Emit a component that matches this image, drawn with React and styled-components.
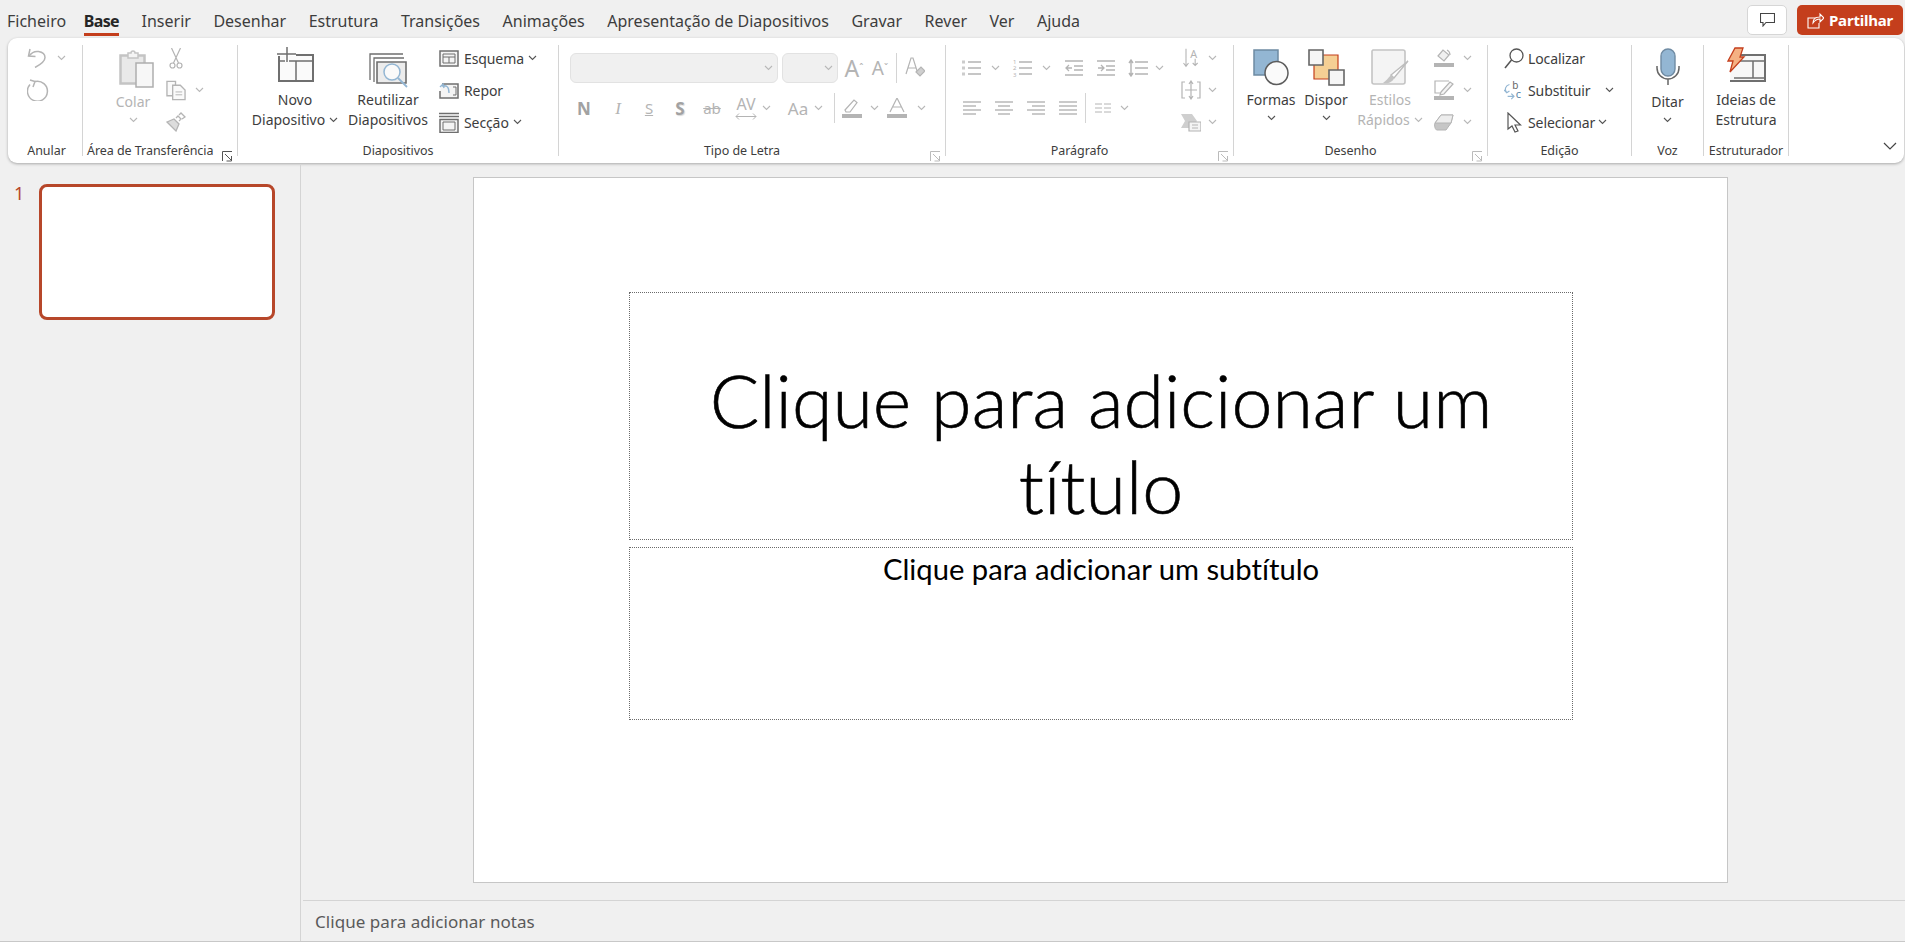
import React from 'react'
import styled, { createGlobalStyle } from 'styled-components'

const ACCENT = '#c43e1c'
const OFF = '#b4b4b4'
const DARK = '#6f6f6f'
const BLUE = '#93b6d3'

const GlobalStyle = createGlobalStyle`
  html, body { margin: 0; padding: 0; background: #f0f0f0; overflow: hidden; }
  body { font-family: "Noto Sans", "Open Sans", "Liberation Sans", sans-serif; color: #3a3a3a; }
`

const Page = styled.div`
  width: 1905px;
  height: 942px;
  display: flex;
  flex-direction: column;
  background: #f0f0f0;
`

const TopBar = styled.div`
  height: 38px;
  display: flex;
  align-items: flex-start;
  padding-left: 7px;
  flex-shrink: 0;
`

const Tabs = styled.div`
  display: flex;
  gap: 22.5px;
  flex: 1;
`

const Tab = styled.div`
  height: 36px;
  box-sizing: border-box;
  padding-top: 10px;
  font-size: 16px;
  line-height: 22px;
  white-space: nowrap;
  color: ${p => (p.$active ? '#262626' : '#3d3d3d')};
  font-weight: ${p => (p.$active ? 700 : 400)};
  letter-spacing: ${p => (p.$active ? '-0.6px' : '0')};
  margin-left: ${p => (p.$active ? '-5px' : '0')};
  border-bottom: 3px solid ${p => (p.$active ? ACCENT : 'transparent')};
`

const TopActions = styled.div`
  display: flex;
  gap: 10px;
  padding: 5px 2px 0 0;
`

const CommentButton = styled.div`
  width: 40px;
  height: 30px;
  box-sizing: border-box;
  background: #fff;
  border: 1px solid #d6d6d6;
  border-radius: 5px;
  display: flex;
  align-items: center;
  justify-content: center;
`

const ShareButton = styled.div`
  width: 106px;
  height: 30px;
  box-sizing: border-box;
  background: ${ACCENT};
  border-radius: 5px;
  color: #fff;
  font-size: 15px;
  font-weight: 700;
  letter-spacing: -0.2px;
  display: flex;
  align-items: center;
  gap: 5px;
  padding-left: 10px;
`

const Ribbon = styled.div`
  height: 125px;
  margin: 0 1px 0 8px;
  box-sizing: border-box;
  padding-top: 7px;
  background: #fff;
  border-radius: 9px;
  box-shadow: 0 1px 3px rgba(0, 0, 0, 0.3);
  display: flex;
  flex-shrink: 0;
`

const Group = styled.div`
  width: ${p => p.$w}px;
  height: 111px;
  box-sizing: border-box;
  border-right: 1px solid #d4d4d4;
  display: flex;
  flex-direction: column;
  position: relative;
  flex-shrink: 0;
`

const GroupBody = styled.div`
  flex: 1;
  display: flex;
  padding-left: ${p => p.$pl || 0}px;
`

const GroupLabel = styled.div`
  height: 10px;
  font-size: 12.5px;
  line-height: 10px;
  letter-spacing: -0.05px;
  text-align: ${p => (p.$left ? 'left' : 'center')};
  color: #3d3d3d;
  white-space: nowrap;
  padding-left: ${p => p.$pl || 0}px;
  padding-right: ${p => p.$pr || 0}px;
`

const LauncherSlot = styled.div`
  position: absolute;
  right: 4px;
  bottom: 0;
  width: 11px;
  height: 11px;
`

const Big = styled.div`
  width: ${p => p.$w}px;
  margin-left: ${p => p.$ml || 0}px;
  display: flex;
  flex-direction: column;
  align-items: center;
  flex-shrink: 0;
  font-size: 14px;
  line-height: 20px;
  white-space: nowrap;
  color: ${p => (p.$off ? OFF : '#3d3d3d')};
`

const BigIcon = styled.div`
  height: ${p => p.$h || 45}px;
  width: 100%;
  display: flex;
  justify-content: center;
  align-items: flex-start;
  padding-top: ${p => p.$top || 2}px;
  padding-left: ${p => p.$pl || 0}px;
  box-sizing: border-box;
`

const BigLine = styled.div`
  display: flex;
  align-items: center;
  gap: 4px;
  height: 20px;
`

const ChevLine = styled.div`
  height: ${p => p.$h || 16}px;
  display: flex;
  align-items: center;
`

const Stack = styled.div`
  display: flex;
  flex-direction: column;
  gap: 6px;
  margin-left: ${p => p.$ml || 0}px;
  flex-shrink: 0;
`

const StackRow = styled.div`
  height: 26px;
  display: flex;
  align-items: center;
  font-size: 14px;
  letter-spacing: -0.1px;
  white-space: nowrap;
  color: #3d3d3d;
`

const RowText = styled.span`
  margin-left: ${p => p.$ml ?? 5}px;
`

const Rows = styled.div`
  display: flex;
  flex-direction: column;
  gap: 10px;
  padding-top: 8px;
  width: ${p => (p.$w ? `${p.$w}px` : 'auto')};
  flex-shrink: 0;
`

const ToolRow = styled.div`
  height: 30px;
  display: flex;
  align-items: center;
`

const Cell = styled.div`
  width: ${p => p.$w}px;
  margin-left: ${p => p.$ml || 0}px;
  height: 30px;
  display: flex;
  align-items: center;
  justify-content: center;
  flex-shrink: 0;
  color: ${OFF};
`

const SpacingCell = styled(Cell)`
  flex-direction: column;
  gap: 1px;
`

const Glyph = styled.span`
  font-family: ${p => (p.$serif ? '"Liberation Serif", serif' : '"Noto Sans", sans-serif')};
  font-size: ${p => p.$size || 15}px;
  font-weight: ${p => (p.$bold ? 700 : 400)};
  font-style: ${p => (p.$italic ? 'italic' : 'normal')};
  line-height: 1;
  color: ${p => (p.$bold ? '#a2a2a2' : OFF)};
  text-decoration: ${p => p.$deco || 'none'};
  text-shadow: ${p => (p.$shadow ? '1px 1px 1px #d8d8d8' : 'none')};
`

const Combo = styled.div`
  width: ${p => p.$w}px;
  margin-left: ${p => p.$ml || 0}px;
  height: 30px;
  box-sizing: border-box;
  background: #f0f0f0;
  border: 1px solid #e2e2e2;
  border-radius: 6px;
  display: flex;
  align-items: center;
  justify-content: flex-end;
  padding-right: 4px;
  flex-shrink: 0;
`

const VSep = styled.div`
  width: 1px;
  height: 30px;
  margin-left: ${p => p.$ml || 0}px;
  background: #d4d4d4;
  flex-shrink: 0;
`

const RibbonRest = styled.div`
  flex: 1;
  display: flex;
  justify-content: flex-end;
  align-items: flex-end;
  padding: 0 7px 6px 0;
  height: 111px;
  box-sizing: border-box;
`

const Main = styled.div`
  flex: 1;
  display: flex;
  margin-top: 2px;
  border-bottom: 1px solid #c8c8c8;
  min-height: 0;
`

const Sidebar = styled.div`
  width: 301px;
  box-sizing: border-box;
  border-right: 1px solid #d4d4d4;
  display: flex;
  padding: 19px 0 0 14px;
  flex-shrink: 0;
`

const ThumbNumber = styled.div`
  width: 25px;
  margin-top: -2px;
  font-size: 18px;
  line-height: 22px;
  color: #b7472a;
`

const Thumb = styled.div`
  width: 236px;
  height: 136px;
  box-sizing: border-box;
  background: #fff;
  border: 3px solid #b7472a;
  border-radius: 8px;
`

const Workspace = styled.div`
  flex: 1;
  display: flex;
  flex-direction: column;
  min-width: 0;
`

const SlideArea = styled.div`
  flex: 1;
  padding: 12px 0 0 172px;
`

const Slide = styled.div`
  width: 1255px;
  height: 706px;
  box-sizing: border-box;
  background: #fff;
  border: 1px solid #c6c6c6;
  padding: 114px 0 0 155px;
  display: flex;
  flex-direction: column;
  gap: 7px;
`

const TitleBox = styled.div`
  width: 944px;
  height: 248px;
  box-sizing: border-box;
  border: 1px dotted #6a6a6a;
  padding: 0 12px 10px;
  display: flex;
  align-items: flex-end;
  text-align: center;
  font-family: Lato, "Open Sans", sans-serif;
  font-weight: 300;
  font-size: 73.5px;
  line-height: 86px;
  font-variant-ligatures: none;
  color: #000;
  -webkit-text-stroke: 0.6px #000;
`

const SubtitleBox = styled.div`
  width: 944px;
  height: 173px;
  box-sizing: border-box;
  border: 1px dotted #6a6a6a;
  padding-top: 3px;
  text-align: center;
  font-family: Lato, "Open Sans", sans-serif;
  font-size: 29.2px;
  line-height: 36px;
  font-variant-ligatures: none;
  color: #000;
`

const TitleText = styled.div`
  width: 100%;
`

const Notes = styled.div`
  height: 41px;
  margin-left: 2px;
  box-sizing: border-box;
  border-top: 1px solid #d4d4d4;
  padding-left: 12px;
  display: flex;
  align-items: center;
  font-size: 17px;
  letter-spacing: 0.05px;
  color: #5a5a5a;
`

const Chev = ({ off = true }) => (
  <svg width="9" height="6" viewBox="0 0 9 6" fill="none">
    <path d="M1 1l3.5 3.5L8 1" stroke={off ? '#b8b8b8' : '#555'} strokeWidth="1.1" />
  </svg>
)

const Launcher = ({ dark }) => (
  <svg width="11" height="11" viewBox="0 0 11 11" fill="none" stroke={dark ? '#555' : '#bbb'}>
    <path d="M.5 10V.5H10M3 3l6 6M9.5 5v5h-5" />
  </svg>
)

const UndoIcon = () => (
  <svg width="20" height="20" viewBox="0 0 20 20" fill="none" stroke={OFF} strokeWidth="1.5">
    <path d="M3 1L1.5 8l7 .5" />
    <path d="M2 8c3-4 6-5 9.500-4.500C15 4 18 6 18 9.500c0 3-2.500 6-10 10" />
  </svg>
)

const RedoIcon = () => (
  <svg width="22" height="22" viewBox="0 0 22 22" fill="none" stroke={OFF} strokeWidth="1.5">
    <path d="M8 2.500a10 10 0 1 1-5 3" />
    <path d="M3 1l5 1.500L6 8" />
  </svg>
)

const PasteIcon = () => (
  <svg width="35" height="39" viewBox="0 0 35 39" fill="none">
    <path d="M1.500 6.500h24v28h-24z" fill="#e9e9e9" stroke="#c4c4c4" strokeWidth="2.500" />
    <path d="M9 6.500V4h3a2 2 0 0 1 4 0h3v5H9z" fill="#f4f4f4" stroke="#c4c4c4" strokeWidth="1.500" />
    <path d="M17 14h17v24H17z" fill="#f7f7f7" stroke="#aeaeae" strokeWidth="1.500" />
  </svg>
)

const ScissorsIcon = () => (
  <svg width="14" height="21" viewBox="0 0 14 21" fill="none" stroke={OFF} strokeWidth="1.200">
    <path d="M2.500 0l7 15M11.500 0l-7 15" />
    <circle cx="3.500" cy="17.500" r="2.500" />
    <circle cx="10.500" cy="17.500" r="2.500" />
  </svg>
)

const CopyIcon = () => (
  <svg width="21" height="21" viewBox="0 0 21 21" fill="#fafafa" stroke={OFF} strokeWidth="1.400">
    <path d="M1 1h9v15H1z" />
    <path d="M7 5h8l5 5v10H7z" />
    <path d="M10 12h7M10 15h7" strokeWidth="1" />
  </svg>
)

const BrushIcon = () => (
  <svg width="20" height="20" viewBox="0 0 20 20" fill="none" stroke={OFF} strokeWidth="1.300">
    <path d="M1 10l7-3 5 5-3 7z" fill="#dcdcdc" />
    <path d="M10 6l2-2 3 3-2 2M13 3l2-2 4 4-3 2" />
  </svg>
)

const NewSlideIcon = () => (
  <svg width="39" height="36" viewBox="0 0 39 36" fill="none">
    <path d="M3 8h34v26H3z" fill="#fafafa" stroke={DARK} strokeWidth="2" />
    <path d="M3 14h34M20 14v20" stroke={DARK} strokeWidth="1.500" />
    <path d="M11 0v15M1 7h19" stroke="#fff" strokeWidth="4" />
    <path d="M11 0v15M1 7h19" stroke={DARK} strokeWidth="1.500" />
  </svg>
)

const ReuseIcon = () => (
  <svg width="39" height="35" viewBox="0 0 39 35" fill="none">
    <path d="M1 27V1h33" stroke={DARK} strokeWidth="1.300" />
    <path d="M5 29V5h30" stroke={DARK} strokeWidth="1.300" />
    <path d="M8 9h29v21H8z" fill="#ececec" stroke={DARK} strokeWidth="1.600" />
    <circle cx="23" cy="19" r="8" fill="#fafafa" stroke={BLUE} strokeWidth="1.500" />
    <path d="M29 25l9 9" stroke={BLUE} strokeWidth="1.800" />
  </svg>
)

const LayoutIcon = () => (
  <svg width="20" height="17" viewBox="0 0 20 17" fill="#f4f4f4" stroke={DARK} strokeWidth="1.500">
    <path d="M1 1h18v15H1z" />
    <path d="M4 4h12v9H4zM4 7h12M10 7v6" strokeWidth="1" />
  </svg>
)

const ResetIcon = () => (
  <svg width="20" height="17" viewBox="0 0 20 17" fill="none">
    <path d="M3 2h16v14H1V9" fill="#f4f4f4" stroke={DARK} strokeWidth="1.500" />
    <path d="M14 5h3v8h-3" stroke={DARK} />
    <path d="M1 5l3-3 1 4M3 4c5-1 7 1 7 7" stroke={BLUE} strokeWidth="1.400" />
  </svg>
)

const SectionIcon = () => (
  <svg width="20" height="21" viewBox="0 0 20 21" fill="#f4f4f4" stroke={DARK} strokeWidth="1.500">
    <path d="M0 1.500h20M0 4.500h20" />
    <path d="M1 7.500h18v13H1z" />
    <path d="M4 10h12v8H4z" strokeWidth="1" />
  </svg>
)

const ClearFormatIcon = () => (
  <svg width="20" height="22" viewBox="0 0 20 22" fill="none" stroke={OFF} strokeWidth="1.200">
    <path d="M1 17L6 1h2l5 16M3 11h8" />
    <path d="M11 15l5-5 4 4-5 5z" fill="#cfcfcf" />
  </svg>
)

const SpacingArrows = () => (
  <svg width="22" height="7" viewBox="0 0 22 7" fill="none" stroke={OFF}>
    <path d="M1 3.500h20M4 .500l-3 3 3 3M18 .500l3 3-3 3" />
  </svg>
)

const HighlightIcon = () => (
  <svg width="20" height="20" viewBox="0 0 20 20" fill="none" stroke={OFF} strokeWidth="1.200">
    <path d="M3 12L12 2l3 2.500L8 14H4z" />
    <path d="M0 16h20v4H0z" fill={OFF} stroke="none" />
  </svg>
)

const FontColorIcon = () => (
  <svg width="20" height="20" viewBox="0 0 20 20" fill="none" stroke={OFF} strokeWidth="1.200">
    <path d="M3 14L10 0l7 14M5.500 9h9" />
    <path d="M0 16h20v4H0z" fill={OFF} stroke="none" />
  </svg>
)

const LinesIcon = ({ w = 18, ys = [3, 7, 11, 15], xs = [] }) => (
  <svg width={w} height="18" viewBox={`0 0 ${w} 18`} fill="none" stroke={OFF} strokeWidth="1.400">
    {ys.map((y, i) => (
      <path key={y} d={`M${xs[i]?.[0] ?? 0} ${y}H${xs[i]?.[1] ?? w}`} />
    ))}
  </svg>
)

const BulletsIcon = () => (
  <svg width="19" height="18" viewBox="0 0 19 18" fill="none" stroke={OFF} strokeWidth="1.400">
    <path d="M6 3h13M6 9h13M6 15h13" />
    <path d="M0 1.500h3v3H0zM0 7.500h3v3H0zM0 13.500h3v3H0z" fill="#ccc" stroke="none" />
  </svg>
)

const NumbersIcon = () => (
  <svg width="20" height="22" viewBox="0 0 20 22" fill="none" stroke={OFF} strokeWidth="1.400">
    <path d="M7 5h13M7 11h13M7 17h13" />
    <text x="1" y="7" fontFamily="Noto Sans" fontSize="6" fill={OFF} stroke="none">1</text>
    <text x="1" y="13" fontFamily="Noto Sans" fontSize="6" fill={OFF} stroke="none">2</text>
    <text x="1" y="20" fontFamily="Noto Sans" fontSize="6" fill={OFF} stroke="none">3</text>
  </svg>
)

const IndentIcon = ({ flip }) => (
  <svg width="18" height="18" viewBox="0 0 18 18" fill="none" stroke={OFF} strokeWidth="1.300">
    <path d="M0 2h18M9 7h9M9 11h9M0 16h18" />
    {flip ? <path d="M7 9H1M4 6l3 3-3 3" /> : <path d="M1 9h6M4 6L1 9l3 3" />}
  </svg>
)

const LineSpacingIcon = () => (
  <svg width="20" height="18" viewBox="0 0 20 18" fill="none" stroke={OFF} strokeWidth="1.400">
    <path d="M7 3h13M7 9h13M7 15h13M3 1v16M1 4l2-3 2 3M1 14l2 3 2-3" />
  </svg>
)

const ColumnsIcon = () => (
  <svg width="16" height="10" viewBox="0 0 16 10" fill="none" stroke={OFF}>
    <path d="M0 1h7M9 1h7M0 5h7M9 5h7M0 9h7M9 9h7" />
  </svg>
)

const TextDirIcon = () => (
  <svg width="24" height="24" viewBox="0 0 24 24" fill="none" stroke={OFF} strokeWidth="1.300">
    <path d="M6 1v20M3 18l3 4 3-4M17 13v8M14 18l3 3 3-3" />
    <text x="11" y="12" fontFamily="Noto Sans" fontSize="13" fill={OFF} stroke="none">A</text>
  </svg>
)

const AlignTextIcon = () => (
  <svg width="20" height="20" viewBox="0 0 20 20" fill="none" stroke={OFF} strokeWidth="1.200">
    <path d="M4 2H1v16h3M16 2h3v16h-3M4 10h12M10 1v18M8 4l2-3 2 3M8 16l2 3 2-3" />
  </svg>
)

const SmartArtIcon = () => (
  <svg width="20" height="20" viewBox="0 0 20 20" fill="none">
    <path d="M0 2h11l5 7-5 7H0l4-7z" fill="#cfcfcf" />
    <path d="M8 10h12v9H8z" fill="#f4f4f4" stroke={OFF} strokeWidth="1.200" />
    <path d="M11 13h6M11 16h6" stroke={OFF} />
  </svg>
)

const ShapesIcon = () => (
  <svg width="36" height="37" viewBox="0 0 36 37" fill="none">
    <path d="M1 1h24v25H1z" fill={BLUE} stroke="#6e8ba3" strokeWidth="1.500" />
    <circle cx="23.500" cy="24" r="11.500" fill="#fafafa" stroke="#5c5c5c" strokeWidth="1.500" />
  </svg>
)

const ArrangeIcon = () => (
  <svg width="37" height="37" viewBox="0 0 37 37" fill="none">
    <path d="M6 6h24v24H6z" fill="#f5cf94" stroke={ACCENT} strokeWidth="1.200" />
    <path d="M1 1h14v15H1z" fill="#f6f6f6" stroke="#666" strokeWidth="1.600" />
    <path d="M21 21h15v15H21z" fill="#f6f6f6" stroke="#666" strokeWidth="1.600" />
  </svg>
)

const QuickStylesIcon = () => (
  <svg width="39" height="37" viewBox="0 0 39 37" fill="none">
    <path d="M2 1h30c1 0 2 1 2 2v30c0 1-1 2-2 2H3c-1 0-2-1-2-2V2z" fill="#f4f4f4" stroke="#c4c4c4" strokeWidth="1.600" />
    <path d="M37 12L23 29l-3-3z" fill="#fff" stroke="#bdbdbd" strokeWidth="1.400" />
    <path d="M20 26l3 3c-1 4-6 6-11 5 3-2 5-5 8-8z" fill="#c4c4c4" />
  </svg>
)

const FillIcon = () => (
  <svg width="20" height="20" viewBox="0 0 20 20" fill="none" stroke={OFF} strokeWidth="1.200">
    <path d="M4 8l5-6 6 5-5 6z" fill="#f0f0f0" />
    <path d="M13 2c2 1 3 3 3 5" />
    <path d="M0 15h20v4H0z" fill={OFF} stroke="none" />
  </svg>
)

const OutlineIcon = () => (
  <svg width="20" height="20" viewBox="0 0 20 20" fill="none" stroke={OFF} strokeWidth="1.200">
    <path d="M15 1H1v12h7" />
    <path d="M7 12l9-10 3 2-9 10-4 1z" fill="#f4f4f4" />
    <path d="M0 16h20v4H0z" fill={OFF} stroke="none" />
  </svg>
)

const EffectsIcon = () => (
  <svg width="20" height="17" viewBox="0 0 20 17" fill="none" stroke={OFF}>
    <path d="M1 9l6-8h12l-2 8-5 7H3C1 16 0 11 1 9z" fill="#c6c6c6" />
    <path d="M7 1h12l-2 8H1z" fill="#ededed" />
  </svg>
)

const FindIcon = () => (
  <svg width="20" height="21" viewBox="0 0 20 21" fill="none" stroke="#555" strokeWidth="1.300">
    <circle cx="12.500" cy="7.500" r="6.500" />
    <path d="M7.500 12L1 20" strokeWidth="1.600" />
  </svg>
)

const ReplaceIcon = () => (
  <svg width="22" height="24" viewBox="0 0 22 24" fill="none">
    <path d="M6 6C2 7 0 11 3 15M0 12l3 3 3-2M4 19h6M8 16l3 3-3 3" stroke={BLUE} strokeWidth="1.300" />
    <text x="9" y="11" fontFamily="Noto Sans" fontSize="11" fill="#666">b</text>
    <text x="13" y="21" fontFamily="Noto Sans" fontSize="12" fill="#5b87a8">c</text>
  </svg>
)

const SelectIcon = () => (
  <svg width="15" height="21" viewBox="0 0 15 21" fill="#fff" stroke="#555" strokeWidth="1.200">
    <path d="M1 1v16l4-3 3 6 3-1-3-6h5.500z" />
  </svg>
)

const MicIcon = () => (
  <svg width="24" height="37" viewBox="0 0 24 37" fill="none">
    <rect x="5" y="1" width="14" height="27" rx="7" fill={BLUE} stroke="#6f8ba3" strokeWidth="1.400" />
    <path d="M1 18v2a11 11 0 0 0 22 0v-2M12 31v6" stroke="#666" strokeWidth="1.500" />
  </svg>
)

const DesignerIcon = () => (
  <svg width="39" height="35" viewBox="0 0 39 35" fill="none">
    <path d="M5 8h33v26H3" fill="#f7f7f7" stroke={DARK} strokeWidth="2" />
    <path d="M7 14h31M26 14v17M7 31h31" stroke={DARK} strokeWidth="1.500" />
    <path d="M8 1h8l-3 9h4L3 25l3-11H1z" fill="#f5b183" stroke={ACCENT} strokeWidth="1.300" />
  </svg>
)

const CommentIcon = () => (
  <svg width="15" height="14" viewBox="0 0 15 14" fill="none" stroke="#444" strokeWidth="1.100">
    <path d="M.5.500h14v9H6L3 13V9.500H.5z" />
  </svg>
)

const ShareIcon = () => (
  <svg width="17" height="17" viewBox="0 0 17 17" fill="none" stroke="#fff" strokeWidth="1.100">
    <path d="M11 6H1v10h11v-5" />
    <path d="M6 11c0-4 3-6 7-6V2l4 4-4 4V7c-3 0-5 1-7 4z" fill={ACCENT} />
  </svg>
)

const TABS = ['Ficheiro', 'Base', 'Inserir', 'Desenhar', 'Estrutura', 'Transições', 'Animações', 'Apresentação de Diapositivos', 'Gravar', 'Rever', 'Ver', 'Ajuda']

export default function App() {
  return (
    <Page>
      <GlobalStyle />
      <TopBar>
        <Tabs>
          {TABS.map(t => <Tab key={t} $active={t === 'Base'}>{t}</Tab>)}
        </Tabs>
        <TopActions>
          <CommentButton><CommentIcon /></CommentButton>
          <ShareButton><ShareIcon />Partilhar</ShareButton>
        </TopActions>
      </TopBar>

      <Ribbon>
        <Group $w={75}>
          <GroupBody $pl={19}>
            <Stack>
              <StackRow><UndoIcon /><Cell $w={10} $ml={9}><Chev /></Cell></StackRow>
              <StackRow><RedoIcon /></StackRow>
            </Stack>
          </GroupBody>
          <GroupLabel $pl={3}>Anular</GroupLabel>
        </Group>

        <Group $w={155}>
          <GroupBody $pl={17}>
            <Big $w={66} $off>
              <BigIcon $h={47} $top={4} $pl={7}><PasteIcon /></BigIcon>
              <BigLine>Colar</BigLine>
              <ChevLine><Chev /></ChevLine>
            </Big>
            <Stack>
              <StackRow><Cell $w={20}><ScissorsIcon /></Cell></StackRow>
              <StackRow><Cell $w={20}><CopyIcon /></Cell><Cell $w={10} $ml={8}><Chev /></Cell></StackRow>
              <StackRow><Cell $w={20}><BrushIcon /></Cell></StackRow>
            </Stack>
          </GroupBody>
          <GroupLabel $left $pl={4}>Área de Transferência</GroupLabel>
          <LauncherSlot><Launcher dark /></LauncherSlot>
        </Group>

        <Group $w={321}>
          <GroupBody $pl={6}>
            <Big $w={102}>
              <BigIcon><NewSlideIcon /></BigIcon>
              <BigLine>Novo</BigLine>
              <BigLine>Diapositivo <Chev off={false} /></BigLine>
            </Big>
            <Big $w={84}>
              <BigIcon $top={8}><ReuseIcon /></BigIcon>
              <BigLine>Reutilizar</BigLine>
              <BigLine>Diapositivos</BigLine>
            </Big>
            <Stack $ml={9}>
              <StackRow><Cell $w={20}><LayoutIcon /></Cell><RowText>Esquema</RowText><Cell $w={10} $ml={4}><Chev off={false} /></Cell></StackRow>
              <StackRow><Cell $w={20}><ResetIcon /></Cell><RowText>Repor</RowText></StackRow>
              <StackRow><Cell $w={20}><SectionIcon /></Cell><RowText>Secção</RowText><Cell $w={10} $ml={4}><Chev off={false} /></Cell></StackRow>
            </Stack>
          </GroupBody>
          <GroupLabel>Diapositivos</GroupLabel>
        </Group>

        <Group $w={387}>
          <GroupBody $pl={11}>
            <Rows>
              <ToolRow>
                <Combo $w={208}><Chev /></Combo>
                <Combo $w={56} $ml={4}><Chev /></Combo>
                <Cell $w={18} $ml={7}><Glyph $size={23}>A</Glyph><Glyph $size={10}>ˆ</Glyph></Cell>
                <Cell $w={18} $ml={8}><Glyph $size={19}>A</Glyph><Glyph $size={10}>ˇ</Glyph></Cell>
                <VSep $ml={7} />
                <Cell $w={20} $ml={8}><ClearFormatIcon /></Cell>
              </ToolRow>
              <ToolRow>
                <Cell $w={28}><Glyph $bold $size={17}>N</Glyph></Cell>
                <Cell $w={20} $ml={10}><Glyph $italic $serif $size={17}>I</Glyph></Cell>
                <Cell $w={20} $ml={11}><Glyph $size={15} $deco="underline">S</Glyph></Cell>
                <Cell $w={20} $ml={11}><Glyph $bold $shadow $size={17}>S</Glyph></Cell>
                <Cell $w={24} $ml={10}><Glyph $size={15} $deco="line-through">ab</Glyph></Cell>
                <SpacingCell $w={30} $ml={7}><Glyph $size={16}>AV</Glyph><SpacingArrows /></SpacingCell>
                <Cell $w={10}><Chev /></Cell>
                <Cell $w={28} $ml={13}><Glyph $size={17}>Aa</Glyph></Cell>
                <Cell $w={12}><Chev /></Cell>
                <VSep $ml={10} />
                <Cell $w={24} $ml={5}><HighlightIcon /></Cell>
                <Cell $w={12} $ml={4}><Chev /></Cell>
                <Cell $w={24} $ml={5}><FontColorIcon /></Cell>
                <Cell $w={12} $ml={6}><Chev /></Cell>
              </ToolRow>
            </Rows>
          </GroupBody>
          <GroupLabel $pr={20}>Tipo de Letra</GroupLabel>
          <LauncherSlot><Launcher /></LauncherSlot>
        </Group>

        <Group $w={288}>
          <GroupBody $pl={16}>
            <Rows $w={219}>
              <ToolRow>
                <Cell $w={19}><BulletsIcon /></Cell>
                <Cell $w={12} $ml={8}><Chev /></Cell>
                <Cell $w={20} $ml={11}><NumbersIcon /></Cell>
                <Cell $w={12} $ml={8}><Chev /></Cell>
                <Cell $w={18} $ml={13}><IndentIcon /></Cell>
                <Cell $w={18} $ml={14}><IndentIcon flip /></Cell>
                <Cell $w={20} $ml={13}><LineSpacingIcon /></Cell>
                <Cell $w={12} $ml={5}><Chev /></Cell>
              </ToolRow>
              <ToolRow>
                <Cell $w={18} $ml={1}><LinesIcon xs={[[0, 18], [0, 13], [0, 18], [0, 13]]} /></Cell>
                <Cell $w={18} $ml={14}><LinesIcon xs={[[0, 18], [3, 15], [0, 18], [3, 15]]} /></Cell>
                <Cell $w={18} $ml={14}><LinesIcon xs={[[0, 18], [5, 18], [0, 18], [5, 18]]} /></Cell>
                <Cell $w={18} $ml={14}><LinesIcon /></Cell>
                <VSep $ml={8} />
                <Cell $w={16} $ml={9}><ColumnsIcon /></Cell>
                <Cell $w={12} $ml={7}><Chev /></Cell>
              </ToolRow>
            </Rows>
            <Stack>
              <StackRow><Cell $w={20}><TextDirIcon /></Cell><Cell $w={12} $ml={5}><Chev /></Cell></StackRow>
              <StackRow><Cell $w={20}><AlignTextIcon /></Cell><Cell $w={12} $ml={5}><Chev /></Cell></StackRow>
              <StackRow><Cell $w={20}><SmartArtIcon /></Cell><Cell $w={12} $ml={5}><Chev /></Cell></StackRow>
            </Stack>
          </GroupBody>
          <GroupLabel $pr={20}>Parágrafo</GroupLabel>
          <LauncherSlot><Launcher /></LauncherSlot>
        </Group>

        <Group $w={254}>
          <GroupBody $pl={11}>
            <Big $w={52}>
              <BigIcon $top={4}><ShapesIcon /></BigIcon>
              <BigLine>Formas</BigLine>
              <ChevLine><Chev off={false} /></ChevLine>
            </Big>
            <Big $w={54} $ml={2}>
              <BigIcon $top={4}><ArrangeIcon /></BigIcon>
              <BigLine>Dispor</BigLine>
              <ChevLine><Chev off={false} /></ChevLine>
            </Big>
            <Big $w={70} $ml={2} $off>
              <BigIcon $top={4}><QuickStylesIcon /></BigIcon>
              <BigLine>Estilos</BigLine>
              <BigLine>Rápidos <Chev /></BigLine>
            </Big>
            <Stack $ml={9}>
              <StackRow><Cell $w={20}><FillIcon /></Cell><Cell $w={12} $ml={7}><Chev /></Cell></StackRow>
              <StackRow><Cell $w={20}><OutlineIcon /></Cell><Cell $w={12} $ml={7}><Chev /></Cell></StackRow>
              <StackRow><Cell $w={20}><EffectsIcon /></Cell><Cell $w={12} $ml={7}><Chev /></Cell></StackRow>
            </Stack>
          </GroupBody>
          <GroupLabel $pr={20}>Desenho</GroupLabel>
          <LauncherSlot><Launcher /></LauncherSlot>
        </Group>

        <Group $w={144}>
          <GroupBody $pl={16}>
            <Stack>
              <StackRow><Cell $w={20}><FindIcon /></Cell><RowText $ml={4}>Localizar</RowText></StackRow>
              <StackRow><Cell $w={20}><ReplaceIcon /></Cell><RowText $ml={4}>Substituir</RowText><Cell $w={10} $ml={14}><Chev off={false} /></Cell></StackRow>
              <StackRow><Cell $w={20}><SelectIcon /></Cell><RowText $ml={4}>Selecionar</RowText><Cell $w={10} $ml={2}><Chev off={false} /></Cell></StackRow>
            </Stack>
          </GroupBody>
          <GroupLabel>Edição</GroupLabel>
        </Group>

        <Group $w={72}>
          <GroupBody>
            <Big $w={71}>
              <BigIcon $h={47} $top={3}><MicIcon /></BigIcon>
              <BigLine>Ditar</BigLine>
              <ChevLine><Chev off={false} /></ChevLine>
            </Big>
          </GroupBody>
          <GroupLabel>Voz</GroupLabel>
        </Group>

        <Group $w={85}>
          <GroupBody>
            <Big $w={84}>
              <BigIcon><DesignerIcon /></BigIcon>
              <BigLine>Ideias de</BigLine>
              <BigLine>Estrutura</BigLine>
            </Big>
          </GroupBody>
          <GroupLabel>Estruturador</GroupLabel>
        </Group>

        <RibbonRest>
          <svg width="14" height="8" viewBox="0 0 14 8" fill="none"><path d="M1 1l6 6 6-6" stroke="#444" strokeWidth="1.200" /></svg>
        </RibbonRest>
      </Ribbon>

      <Main>
        <Sidebar>
          <ThumbNumber>1</ThumbNumber>
          <Thumb />
        </Sidebar>
        <Workspace>
          <SlideArea>
            <Slide>
              <TitleBox><TitleText>Clique para adicionar um título</TitleText></TitleBox>
              <SubtitleBox>Clique para adicionar um subtítulo</SubtitleBox>
            </Slide>
          </SlideArea>
          <Notes>Clique para adicionar notas</Notes>
        </Workspace>
      </Main>
    </Page>
  )
}
